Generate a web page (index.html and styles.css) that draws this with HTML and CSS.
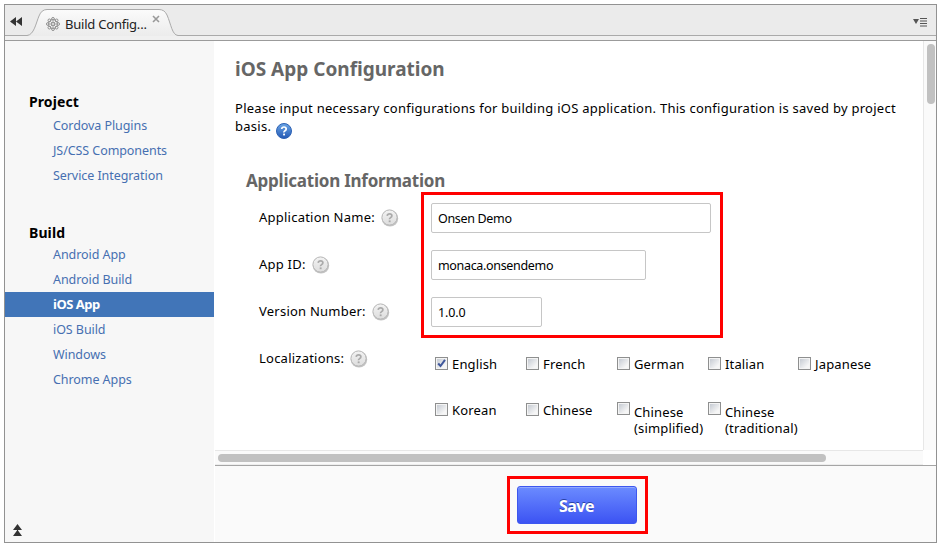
FILE: index.html
```html
<!DOCTYPE html>
<html lang="en">
<head>
<meta charset="utf-8">
<title>Build Configuration</title>
<link rel="stylesheet" href="styles.css">
</head>
<body>
<svg class="defs" width="0" height="0">
  <defs>
    <linearGradient id="tabFill" x1="0" y1="0" x2="0" y2="1"><stop offset="0" stop-color="#fbfbfb"/><stop offset="1" stop-color="#ebebeb"/></linearGradient>
    <linearGradient id="blueFill" x1="0" y1="0" x2="0" y2="1"><stop offset="0" stop-color="#6ba6e6"/><stop offset="1" stop-color="#2459b4"/></linearGradient>
    <linearGradient id="greyFill" x1="0" y1="0" x2="0" y2="1"><stop offset="0" stop-color="#f3f3f3"/><stop offset="1" stop-color="#dddddd"/></linearGradient>
    <symbol id="help" viewBox="0 0 18 18">
      <circle cx="9" cy="9.4" r="8.2" fill="#c4c4c4"/>
      <circle cx="8.5" cy="8.5" r="7.6" fill="url(#greyFill)" stroke="#b7b7b7"/>
      <path d="M6.2 6.8Q6.4 4.8 8.6 4.8T10.9 6.7Q10.9 7.8 9.6 8.6T8.6 10.3" fill="none" stroke="#aaa" stroke-width="1.7"/>
      <rect x="7.7" y="11.4" width="1.9" height="1.8" fill="#aaa"/>
    </symbol>
  </defs>
</svg>
<div class="window">
  <header class="tabbar">
    <svg class="collapse" width="12" height="9" viewBox="0 0 12 9"><path d="M6 0V9L0 4.5ZM12 0V9L6 4.5Z" fill="#333"/></svg>
    <div class="tab">
      <svg class="tab-shape" width="154" height="28" viewBox="0 0 154 28"><path d="M0 26.500C7 26 9 14 12 7Q14.500 .5 20 .5H132Q137.500 .5 140 6C144 15 145 26 151 26.500V28H0Z" fill="url(#tabFill)"/><path d="M0 26.500C7 26 9 14 12 7Q14.500 .5 20 .5H132Q137.500 .5 140 6C144 15 145 26 151 26.500" fill="none" stroke="#aaa"/></svg>
      <div class="tab-body">
        <svg class="gear" width="14" height="14" viewBox="0 0 14 14"><g fill="#f2f2f2" stroke="#858585" stroke-width=".9"><circle cx="7" cy="1.900" r="1.400"/><circle cx="10.600" cy="3.400" r="1.400"/><circle cx="12.100" cy="7" r="1.400"/><circle cx="10.600" cy="10.600" r="1.400"/><circle cx="7" cy="12.100" r="1.400"/><circle cx="3.400" cy="10.600" r="1.400"/><circle cx="1.900" cy="7" r="1.400"/><circle cx="3.400" cy="3.400" r="1.400"/><circle cx="7" cy="7" r="4.300"/><circle cx="7" cy="7" r="1.500"/></g><path d="M7 2.800V5.500M7 8.500V11.200M2.800 7H5.500M8.500 7H11.200M4 4L6 6M8 8L10 10M10 4L8 6M6 8L4 10" stroke="#8d8d8d" stroke-width=".8"/></svg>
        <span class="tab-title">Build Config...</span>
        <svg class="close" width="8" height="8" viewBox="0 0 8 8"><path d="M1 1L7 7M7 1L1 7" stroke="#999" stroke-width="1.600"/></svg>
      </div>
    </div>
    <svg class="menu" width="14" height="9" viewBox="0 0 14 9"><path d="M0 1H6L3 6Z" fill="#555"/><path d="M7 .5H14M7 3H14M7 5.500H14M7 8H14" stroke="#555"/></svg>
  </header>
  <div class="strip"></div>
  <div class="body">
    <nav class="side">
      <h3>Project</h3>
      <ul class="project">
        <li>Cordova Plugins</li>
        <li>JS/CSS Components</li>
        <li>Service Integration</li>
      </ul>
      <h3>Build</h3>
      <ul>
        <li>Android App</li>
        <li>Android Build</li>
        <li class="active">iOS App</li>
        <li>iOS Build</li>
        <li>Windows</li>
        <li>Chrome Apps</li>
      </ul>
      <svg class="up" width="9" height="12" viewBox="0 0 9 12"><path d="M4.500 0L9 6H5V6.500L9 12H0L4 6.500V6H0Z" fill="#333"/></svg>
    </nav>
    <main class="main">
      <div class="scroller">
        <section class="content">
          <h1>iOS App Configuration</h1>
          <p class="intro">Please input necessary configurations for building iOS application. This configuration is saved by project<br>basis. <svg class="info" width="16" height="16" viewBox="0 0 16 16"><circle cx="8" cy="8" r="7.500" fill="url(#blueFill)" stroke="#2d62b4"/><path d="M5.700 6Q5.900 4 8 4T10.200 5.900Q10.200 7 9 7.800T8 9.500" fill="none" stroke="#fff" stroke-width="1.700"/><rect x="7.100" y="10.600" width="1.900" height="1.800" fill="#fff"/></svg></p>
          <h2>Application Information</h2>
          <div class="form">
            <div class="fields">
              <div class="row"><label>Application Name:</label><svg class="help"><use href="#help"/></svg></div>
              <div class="row"><label>App ID:</label><svg class="help"><use href="#help"/></svg></div>
              <div class="row"><label>Version Number:</label><svg class="help"><use href="#help"/></svg></div>
              <div class="row"><label>Localizations:</label><svg class="help"><use href="#help"/></svg></div>
            </div>
            <div class="values">
              <div class="marked">
                <div class="input wide">Onsen Demo</div>
                <div class="input mid">monaca.onsendemo</div>
                <div class="input small">1.0.0</div>
              </div>
              <div class="langs">
                <div class="lang"><i class="box"><svg width="9" height="9" viewBox="0 0 9 9"><path d="M1.200 4.500L3.500 7L8 .8" fill="none" stroke="#3f579b" stroke-width="2"/></svg></i><span>English</span></div>
                <div class="lang"><i class="box"></i><span>French</span></div>
                <div class="lang"><i class="box"></i><span>German</span></div>
                <div class="lang"><i class="box"></i><span>Italian</span></div>
                <div class="lang"><i class="box"></i><span>Japanese</span></div>
                <div class="lang"><i class="box"></i><span>Korean</span></div>
                <div class="lang"><i class="box"></i><span>Chinese</span></div>
                <div class="lang tall"><i class="box"></i><span>Chinese<br>(simplified)</span></div>
                <div class="lang tall"><i class="box"></i><span>Chinese<br>(traditional)</span></div>
              </div>
            </div>
          </div>
        </section>
        <div class="vbar"><div class="vthumb"></div></div>
        <div class="hbar"><div class="hthumb"></div></div>
      </div>
      <footer class="footer"><div class="save-mark"><button class="save">Save</button></div></footer>
    </main>
  </div>
</div>
</body>
</html>
```
FILE: styles.css
```css
* { box-sizing: border-box; }
body { margin: 0; width: 940px; height: 547px; overflow: hidden; background: #fff; font: 13px/18px "Noto Sans", "Open Sans", sans-serif; color: #000; }
svg { display: block; flex: none; }
.defs { position: absolute; }
h1, h2, h3, p, ul { margin: 0; padding: 0; }
.window { margin: 4px; width: 933px; height: 539px; border: 1px solid #929292; display: flex; flex-direction: column; }
.tabbar { height: 31px; flex: none; background: #ebebeb; border-bottom: 1px solid #aaa; display: flex; align-items: flex-start; }
.collapse { margin: 12px 0 0 5px; }
.tab { display: grid; margin: 4px 0 0 5px; width: 154px; height: 28px; }
.tab-shape, .tab-body { grid-area: 1 / 1; }
.tab-body { display: flex; padding-left: 19px; }
.gear { margin-top: 8px; }
.tab-title { margin: 6px 0 0 5px; width: 87px; color: #222; white-space: nowrap; letter-spacing: -.22px; }
.close { margin-top: 6px; }
.menu { margin: 13px 9px 0 auto; }
.strip { height: 5px; flex: none; background: #f0f0f0; border-bottom: 1px solid #9b9b9b; }
.body { flex: 1; display: flex; min-height: 0; }
.side { width: 209px; background: #f7f7f7; display: flex; flex-direction: column; padding-top: 50px; }
.side h3 { font-size: 14px; line-height: 22px; padding-left: 24px; letter-spacing: .1px; }
.side ul { list-style: none; }
.side .project { margin-bottom: 35px; }
.side li { height: 25px; line-height: 25px; padding-left: 48px; color: #466fb1; white-space: nowrap; font-size: 12.5px; letter-spacing: -.07px; }
.side li.active { background: #4175b8; color: #fff; font-weight: 700; font-size: 13px; letter-spacing: -.5px; }
.side ul + h3 { line-height: 20px; margin-bottom: -1px; }
.up { margin: auto 0 6px 8px; }
.main { margin-left: 1px; flex: 1; display: flex; flex-direction: column; }
.scroller { height: 425px; flex: none; display: grid; grid-template: 409px 15px / 708px 13px; border-bottom: 1px solid #a5a5a5; }
.content { padding: 16px 0 0 20px; overflow: hidden; }
h1 { font-size: 19px; line-height: 25px; color: #666; white-space: nowrap; }
.intro { margin-top: 17px; height: 38px; white-space: nowrap; letter-spacing: .26px; }
.info { display: inline-block; vertical-align: -8px; margin-left: 1px; }
h2 { font-size: 17px; line-height: 24px; color: #666; margin: 32px 0 0 11px; white-space: nowrap; letter-spacing: -.23px; }
.form { display: flex; }
.fields { width: 186px; padding-left: 24px; }
.row { height: 47px; padding-top: 15px; display: flex; gap: 6px; white-space: nowrap; letter-spacing: .23px; }
.help { width: 18px; height: 18px; margin-top: 1px; }
.marked { width: 302px; height: 146px; margin-top: -1px; border: 3px solid #f00; padding: 8px 7px; display: flex; flex-direction: column; gap: 17px; }
.input { height: 30px; border: 1px solid #c6c6c6; border-radius: 2px; padding-left: 6px; line-height: 29px; font-size: 12.5px; letter-spacing: -.33px; }
.wide { width: 280px; }
.mid { width: 215px; }
.small { width: 111px; letter-spacing: -.1px; }
.langs { display: grid; grid-template-columns: repeat(3, 91px) 90px 100px; grid-auto-rows: 46px; padding: 17px 0 0 14px; }
.lang { display: flex; gap: 4px; white-space: nowrap; line-height: 16px; letter-spacing: .15px; }
.box { width: 13px; height: 13px; margin-top: 2px; flex: none; border: 1px solid #8e8f8f; background: linear-gradient(135deg, #bfc5ce, #f6f6f6 75%); box-shadow: inset 0 0 0 1px #f4f4f4; display: flex; align-items: center; justify-content: center; }
.lang span { margin-top: 1px; }
.tall .box { margin-top: 1px; }
.tall span { margin-top: 3px; }
.vbar { background: #fafafa; border-left: 1px solid #e7e7e7; padding: 3px 0 0 3px; }
.vthumb { width: 8px; height: 60px; border-radius: 4px; background: #c1c1c1; }
.hbar { background: #fafafa; border-top: 1px solid #e7e7e7; border-bottom: 1px solid #ededed; padding: 3px 0 0 3px; }
.hthumb { width: 608px; height: 8px; border-radius: 4px; background: #c1c1c1; }
.footer { flex: 1; background: #fafafa; display: flex; justify-content: center; padding: 10px 0 0 4px; }
.save-mark { width: 141px; height: 58px; border: 3px solid #f00; padding: 7px; }
.save { display: block; width: 120px; height: 38px; border: 1px solid #3d57ef; border-radius: 3px; background: linear-gradient(#6b8bff, #3c53f3); box-shadow: inset 0 1px #91a8ff; color: #fff; font: 700 16px "Noto Sans", sans-serif; letter-spacing: -.5px; text-shadow: 0 -1px #2942a5; padding: 2px 1px 0 0; }
```
